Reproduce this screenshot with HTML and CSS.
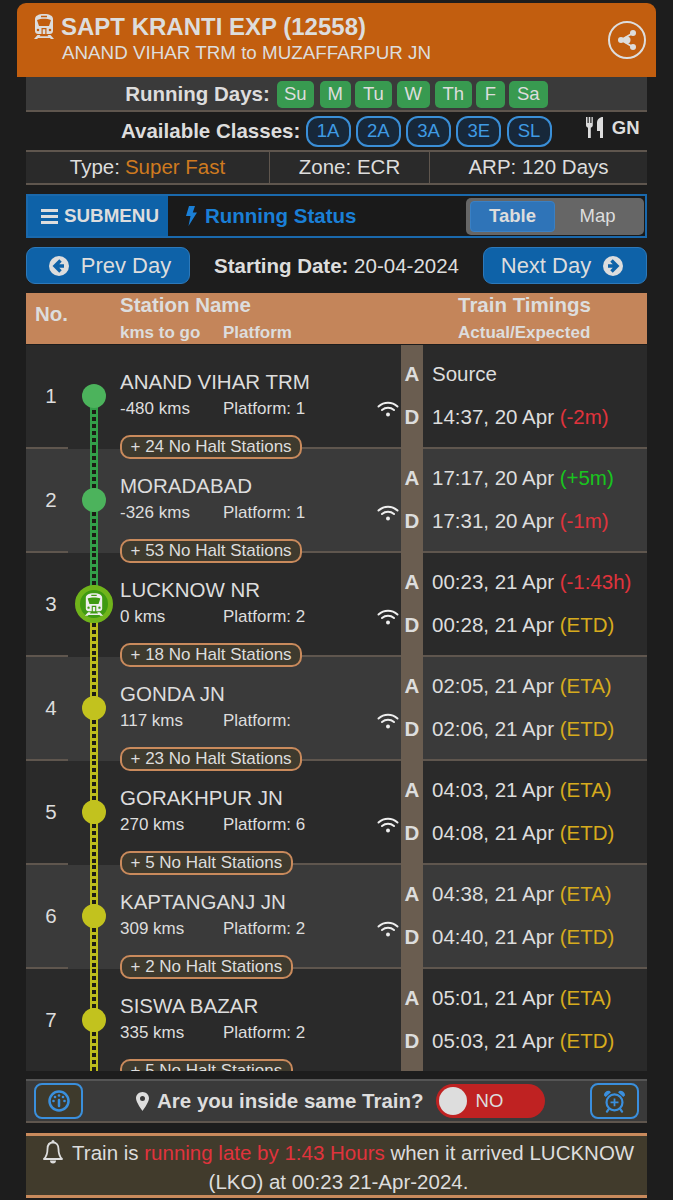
FILE: index.html
```html
<!DOCTYPE html>
<html lang="en">
<head>
<meta charset="utf-8">
<title>SAPT KRANTI EXP (12558)</title>
<link rel="stylesheet" href="styles.css">
</head>
<body>
<svg class="defs" width="0" height="0" aria-hidden="true">
  <symbol id="train" viewBox="0 0 22 25">
    <path fill="currentColor" fill-rule="evenodd" d="M11 0c6 0 9 2 9 5v12c0 2-1.500 3-3 3H5c-1.500 0-3-1-3-3V5c0-3 3-5 9-5zM8 1.800v1.400h6V1.800zM4 6l2 6h10l2-6c-4-1.600-10-1.600-14 0zM5 14.700a1.300 1.300 0 1 0 0 2.600 1.300 1.300 0 0 0 0-2.600zm12 0a1.300 1.300 0 1 0 0 2.600 1.300 1.300 0 0 0 0-2.600zM8.500 14v6h1.200v-4.800h2.600V20h1.200v-6z"/>
    <path fill="currentColor" d="M4.500 21h3l-1 1.300h9L14.500 21h3L21 25h-3.200l-.8-1H5l-.8 1H1z"/>
  </symbol>
  <symbol id="wifi" viewBox="0 0 22 16">
    <path fill="none" stroke="currentColor" stroke-width="2" stroke-linecap="round" d="M1.500 5.500c5.500-5 13.500-5 19 0M5 9c3.500-3 8.500-3 12 0"/>
    <circle cx="11" cy="13.500" r="2" fill="currentColor"/>
  </symbol>
</svg>

<header class="head">
  <svg class="head-train"><use href="#train"/></svg>
  <div class="head-text">
    <h1 class="head-title">SAPT KRANTI EXP (12558)</h1>
    <p class="head-sub">ANAND VIHAR TRM to MUZAFFARPUR JN</p>
  </div>
  <div class="share">
    <svg width="22" height="22" viewBox="0 0 22 22"><path fill="none" stroke="currentColor" stroke-width="2" d="M5 11l12-7M5 11l12 7"/><circle cx="5" cy="11" r="3" fill="currentColor"/><circle cx="17" cy="4" r="3" fill="currentColor"/><circle cx="17" cy="18" r="3" fill="currentColor"/><circle cx="11" cy="11" r="3.500" fill="currentColor"/></svg>
  </div>
</header>

<main class="wrap">
  <section class="days">
    <b class="lbl">Running Days:</b>
    <span class="day w-su">Su</span><span class="day w-m">M</span><span class="day w-tu">Tu</span><span class="day w-w">W</span><span class="day w-th">Th</span><span class="day w-f">F</span><span class="day w-sa">Sa</span>
  </section>

  <section class="classes">
    <b class="lbl">Available Classes:</b>
    <span class="cls">1A</span><span class="cls">2A</span><span class="cls">3A</span><span class="cls">3E</span><span class="cls">SL</span>
    <span class="food">
      <svg width="18" height="21" viewBox="0 0 18 21"><path fill="currentColor" d="M0 0h1.500v6h1.200V0h1.600v6h1.200V0H6.800v8c0 1.500-.8 2.300-2 2.700V21H2V10.700C.8 10.300 0 9.500 0 8zM17 0v21h-3v-7h-3V6c0-3.500 2.500-6 6-6z"/></svg>
      <b class="gn">GN</b>
    </span>
  </section>

  <section class="meta">
    <div class="meta-a">Type: <span class="orange">Super Fast</span></div>
    <div class="meta-b">Zone: ECR</div>
    <div class="meta-c">ARP: 120 Days</div>
  </section>

  <nav class="tabs">
    <div class="submenu">
      <svg width="17" height="15" viewBox="0 0 17 15"><path fill="currentColor" d="M0 0h17v3H0zM0 6h17v3H0zM0 12h17v3H0z"/></svg>
      <b>SUBMENU</b>
    </div>
    <div class="status">
      <svg width="11" height="20" viewBox="0 0 11 20"><path fill="currentColor" d="M3 0h6L6.800 6.500H11L2.500 20l2-10H0z"/></svg>
      <b>Running Status</b>
    </div>
    <div class="seg"><span class="seg-on">Table</span><span class="seg-off">Map</span></div>
  </nav>

  <section class="dates">
    <button class="btn btn-prev">
      <svg width="20" height="20" viewBox="0 0 20 20"><circle cx="10" cy="10" r="10" fill="currentColor"/><path fill="none" stroke="#0e62a8" stroke-width="3.500" d="M11.500 4.500L6 10l5.500 5.500M6.500 10H15"/></svg>
      <span>Prev Day</span>
    </button>
    <div class="start"><b>Starting Date:</b> 20-04-2024</div>
    <button class="btn btn-next">
      <span>Next Day</span>
      <svg width="20" height="20" viewBox="0 0 20 20"><circle cx="10" cy="10" r="10" fill="currentColor"/><path fill="none" stroke="#0e62a8" stroke-width="3.500" d="M8.500 4.500L14 10l-5.500 5.500M13.500 10H5"/></svg>
    </button>
  </section>

  <section class="thead">
    <b class="th-no">No.</b>
    <div class="th-st">
      <b class="th-big">Station Name</b>
      <div class="th-small"><b class="th-kms">kms to go</b><b>Platform</b></div>
    </div>
    <div class="th-tm">
      <b class="th-big">Train Timings</b>
      <div class="th-small"><b>Actual/Expected</b></div>
    </div>
  </section>

  <section class="list">
    <article class="row">
      <div class="no">1</div>
      <div class="tl tl-first"><i class="bar"></i><i class="dot"></i></div>
      <div class="st"><div class="st-main"><div class="name">ANAND VIHAR TRM</div><div class="sub"><span class="kms">-480 kms</span><span>Platform: 1</span></div><div class="pill">+ 24 No Halt Stations</div></div><svg class="wifi"><use href="#wifi"/></svg></div>
      <div class="ad"><b>A</b><b>D</b></div>
      <div class="tm"><div>Source</div><div>14:37, 20 Apr <span class="red">(-2m)</span></div></div>
    </article>
    <article class="row">
      <div class="no">2</div>
      <div class="tl"><i class="bar"></i><i class="dot"></i></div>
      <div class="st"><div class="st-main"><div class="name">MORADABAD</div><div class="sub"><span class="kms">-326 kms</span><span>Platform: 1</span></div><div class="pill">+ 53 No Halt Stations</div></div><svg class="wifi"><use href="#wifi"/></svg></div>
      <div class="ad"><b>A</b><b>D</b></div>
      <div class="tm"><div>17:17, 20 Apr <span class="green">(+5m)</span></div><div>17:31, 20 Apr <span class="red">(-1m)</span></div></div>
    </article>
    <article class="row">
      <div class="no">3</div>
      <div class="tl tl-now"><i class="bar"></i><i class="now"><svg width="22" height="25"><use href="#train"/></svg></i></div>
      <div class="st"><div class="st-main"><div class="name">LUCKNOW NR</div><div class="sub"><span class="kms">0 kms</span><span>Platform: 2</span></div><div class="pill">+ 18 No Halt Stations</div></div><svg class="wifi"><use href="#wifi"/></svg></div>
      <div class="ad"><b>A</b><b>D</b></div>
      <div class="tm"><div>00:23, 21 Apr <span class="red">(-1:43h)</span></div><div>00:28, 21 Apr <span class="gold">(ETD)</span></div></div>
    </article>
    <article class="row">
      <div class="no">4</div>
      <div class="tl tl-next"><i class="bar"></i><i class="dot"></i></div>
      <div class="st"><div class="st-main"><div class="name">GONDA JN</div><div class="sub"><span class="kms">117 kms</span><span>Platform:</span></div><div class="pill">+ 23 No Halt Stations</div></div><svg class="wifi"><use href="#wifi"/></svg></div>
      <div class="ad"><b>A</b><b>D</b></div>
      <div class="tm"><div>02:05, 21 Apr <span class="gold">(ETA)</span></div><div>02:06, 21 Apr <span class="gold">(ETD)</span></div></div>
    </article>
    <article class="row">
      <div class="no">5</div>
      <div class="tl tl-next"><i class="bar"></i><i class="dot"></i></div>
      <div class="st"><div class="st-main"><div class="name">GORAKHPUR JN</div><div class="sub"><span class="kms">270 kms</span><span>Platform: 6</span></div><div class="pill">+ 5 No Halt Stations</div></div><svg class="wifi"><use href="#wifi"/></svg></div>
      <div class="ad"><b>A</b><b>D</b></div>
      <div class="tm"><div>04:03, 21 Apr <span class="gold">(ETA)</span></div><div>04:08, 21 Apr <span class="gold">(ETD)</span></div></div>
    </article>
    <article class="row">
      <div class="no">6</div>
      <div class="tl tl-next"><i class="bar"></i><i class="dot"></i></div>
      <div class="st"><div class="st-main"><div class="name">KAPTANGANJ JN</div><div class="sub"><span class="kms">309 kms</span><span>Platform: 2</span></div><div class="pill">+ 2 No Halt Stations</div></div><svg class="wifi"><use href="#wifi"/></svg></div>
      <div class="ad"><b>A</b><b>D</b></div>
      <div class="tm"><div>04:38, 21 Apr <span class="gold">(ETA)</span></div><div>04:40, 21 Apr <span class="gold">(ETD)</span></div></div>
    </article>
    <article class="row">
      <div class="no">7</div>
      <div class="tl tl-next"><i class="bar"></i><i class="dot"></i></div>
      <div class="st"><div class="st-main"><div class="name">SISWA BAZAR</div><div class="sub"><span class="kms">335 kms</span><span>Platform: 2</span></div><div class="pill">+ 5 No Halt Stations</div></div></div>
      <div class="ad"><b>A</b><b>D</b></div>
      <div class="tm"><div>05:01, 21 Apr <span class="gold">(ETA)</span></div><div>05:03, 21 Apr <span class="gold">(ETD)</span></div></div>
    </article>
  </section>

  <section class="inside">
    <div class="sq">
      <svg width="22" height="22" viewBox="0 0 22 22"><circle cx="11" cy="11" r="9.500" fill="none" stroke="currentColor" stroke-width="2.500"/><path fill="none" stroke="currentColor" stroke-width="2.500" stroke-linecap="round" d="M11 10v6"/><circle cx="11" cy="5.500" r="1.300" fill="currentColor"/><circle cx="7" cy="7" r="1.300" fill="currentColor"/><circle cx="15" cy="7" r="1.300" fill="currentColor"/><circle cx="5.500" cy="11" r="1.300" fill="currentColor"/><circle cx="16.500" cy="11" r="1.300" fill="currentColor"/></svg>
    </div>
    <div class="q">
      <svg width="13" height="19" viewBox="0 0 13 19"><path fill="currentColor" fill-rule="evenodd" d="M6.500 0C10 0 13 2.800 13 6.300 13 10.500 6.500 19 6.500 19S0 10.500 0 6.300C0 2.800 3 0 6.500 0zm0 4a2.500 2.500 0 1 0 0 5 2.500 2.500 0 0 0 0-5z"/></svg>
      <b>Are you inside same Train?</b>
    </div>
    <div class="toggle"><i class="knob"></i><span>NO</span></div>
    <div class="sq">
      <svg width="23" height="23" viewBox="0 0 26 26"><circle cx="13" cy="14" r="9" fill="none" stroke="currentColor" stroke-width="2.500"/><path fill="none" stroke="currentColor" stroke-width="2" d="M13 9.500v9M8.500 14h9"/><path fill="currentColor" d="M1 6C1.500 2.500 4 .5 7.500 1L9 2.500 3 8zM25 6C24.500 2.500 22 .5 18.500 1L17 2.500 23 8z"/><path fill="none" stroke="currentColor" stroke-width="2.500" stroke-linecap="round" d="M6.500 21.500L4.500 24.500M19.500 21.500l2 3"/></svg>
    </div>
  </section>

  <section class="note">
    <svg class="bell" width="20" height="25" viewBox="0 0 20 25"><path fill="none" stroke="currentColor" stroke-width="1.800" stroke-linejoin="round" d="M10 2.500c-3.500 0-5.500 2.500-5.500 6.500 0 5-1.500 8-3.500 10h18c-2-2-3.500-5-3.500-10 0-4-2-6.500-5.500-6.500z"/><path fill="currentColor" d="M8.500 1.500a1.500 1.500 0 0 1 3 0V3h-3zM7 20.500h6a3 3 0 0 1-6 0z"/></svg>
    Train is <span class="late">running late by 1:43 Hours</span> when it arrived LUCKNOW (LKO) at 00:23 21-Apr-2024.
  </section>
</main>
</body>
</html>
```

FILE: styles.css
```css
* { box-sizing: border-box; }
html, body { margin: 0; padding: 0; }
body {
  height: 1200px;
  overflow: hidden;
  padding-top: 3px;
  background: #1d1d1d;
  color: #ddd;
  font-family: "Liberation Sans", Arial, sans-serif;
}
b { font-weight: 700; }
.defs { display: block; height: 0; }

.head {
  display: flex;
  align-items: flex-start;
  height: 74px;
  margin: 0 17px;
  padding: 10px 10px 0 16px;
  background: #c25e0f;
  border-radius: 9px 9px 0 0;
}
.head-train { width: 22px; height: 25px; margin-top: 1px; flex: none; color: #ddd; }
.head-text { flex: 1; margin-left: 6px; }
.head-title { margin: 0; font-size: 24px; line-height: 27px; font-weight: 700; }
.head-sub { margin: 2px 0 0 1px; font-size: 18.8px; line-height: 22px; }
.share {
  display: flex;
  align-items: center;
  justify-content: center;
  width: 38px;
  height: 38px;
  margin-top: 8px;
  border: 2px solid #ddd;
  border-radius: 50%;
}

.wrap { margin: 0 26px; }

.days {
  display: flex;
  align-items: center;
  justify-content: center;
  height: 35px;
  padding-top: 1px;
  gap: 4px;
  background: #3a3a3a;
  border-bottom: 2px solid #5f564e;
}
.lbl { font-size: 20.5px; }
.days .lbl { margin-right: 3px; }
.day {
  display: flex;
  align-items: center;
  justify-content: center;
  height: 27px;
  font-size: 18.5px;
  background: #389a50;
  border-radius: 5px;
}
.w-su, .w-tu, .w-th { width: 37px; }
.w-su { margin-right: 2px; }
.w-m { width: 31px; }
.w-w { width: 33px; margin: 0 1px; }
.w-f { width: 29px; }
.w-sa { width: 39px; }

.classes {
  display: flex;
  align-items: center;
  height: 38px;
  padding-left: 95px;
  gap: 5.25px;
}
.cls {
  display: flex;
  align-items: center;
  justify-content: center;
  width: 45px;
  height: 31px;
  font-size: 18.5px;
  color: #3f9be4;
  background: #17283a;
  border: 2px solid #3a8fd8;
  border-radius: 12px;
}
.food {
  display: flex;
  align-items: center;
  gap: 8px;
  margin-left: 29px;
  margin-top: -7px;
}
.gn { font-size: 18.5px; }

.meta {
  display: grid;
  grid-template-columns: 243px 160px 1fr;
  height: 35px;
  font-size: 20.5px;
  background: #2a2a2a;
  border-top: 2px solid #5f564e;
  border-bottom: 2px solid #5f564e;
}
.meta > div { display: flex; align-items: center; justify-content: center; gap: 5px; padding-bottom: 2px; }
.meta-b, .meta-c { border-left: 1px solid #5f564e; }
.orange { color: #cf7a1f; }

.tabs {
  display: flex;
  align-items: center;
  height: 44px;
  margin-top: 9px;
  background: #1a1a1a;
  border: 2px solid #1a69ad;
}
.submenu {
  display: flex;
  align-items: center;
  gap: 6px;
  width: 140px;
  height: 100%;
  padding-left: 13px;
  font-size: 18.8px;
  background: #0e62a8;
}
.status {
  display: flex;
  align-items: center;
  gap: 8px;
  flex: 1;
  padding-left: 18px;
  font-size: 20.5px;
  color: #1a7fd6;
}
.seg {
  display: flex;
  align-items: center;
  width: 178px;
  height: 37px;
  margin-right: 1px;
  padding: 3px 4px;
  font-size: 18.5px;
  background: #666;
  border-radius: 5px;
}
.seg-on {
  display: flex;
  align-items: center;
  justify-content: center;
  width: 85px;
  height: 31px;
  font-weight: 700;
  background: #2f74b8;
  border: 1px solid #3a80c4;
  border-radius: 4px;
}
.seg-off { flex: 1; text-align: center; }

.dates {
  display: flex;
  align-items: center;
  justify-content: space-between;
  margin-top: 9px;
  height: 37px;
}
.btn {
  display: flex;
  align-items: center;
  justify-content: center;
  gap: 12px;
  width: 164px;
  height: 37px;
  padding: 0;
  font: 22px "Liberation Sans", Arial, sans-serif;
  color: #ddd;
  background: #0e62a8;
  border: 1px solid #2d79ba;
  border-radius: 9px;
}
.btn-prev { padding-left: 4px; }
.btn-next { padding-right: 6px; }
.start { font-size: 20.5px; }

.thead {
  display: grid;
  grid-template-columns: 94px 338px 1fr;
  height: 51px;
  margin-top: 9px;
  color: #ddd;
  background: #c4855a;
}
.th-no { align-self: center; padding: 0 0 9px 9px; font-size: 20.5px; }
.th-big { display: block; font-size: 20.5px; line-height: 24px; }
.th-small { display: flex; margin-top: 4px; font-size: 17px; line-height: 23px; }
.th-kms { width: 103px; }

.list {
  height: 726px;
  margin-top: 1px;
  overflow: hidden;
}
.row {
  display: grid;
  grid-template-columns: 42px 52px 281px 22px 1fr;
  grid-template-rows: 104px;
  height: 104px;
  background: #2a2a2a;
}
.row:nth-child(even) { background: #3a3a3a; }
.no {
  display: flex;
  align-items: center;
  justify-content: center;
  padding-left: 8px;
  font-size: 20.5px;
  border-bottom: 2px solid #5f564e;
}
.tl {
  --line: #339f49;
  position: relative;
  display: flex;
  justify-content: center;
  align-items: flex-start;
  padding-top: 39px;
}
.tl-next { --line: #bcbc1c; }
.bar {
  position: absolute;
  top: 0;
  bottom: 0;
  left: 22px;
  width: 8px;
  background: repeating-linear-gradient(to bottom, #1c1c14 0 4px, transparent 4px 7px) center / 4px 100% no-repeat, var(--line);
}
.tl-first .bar { top: 51px; }
.tl-now .bar {
  background: repeating-linear-gradient(to bottom, #1c1c14 0 4px, transparent 4px 7px) center / 4px 100% no-repeat, linear-gradient(to bottom, #339f49 51px, #bcbc1c 51px);
}
.dot {
  position: relative;
  width: 24px;
  height: 24px;
  background: #4cb35c;
  border-radius: 50%;
}
.tl-next .dot { background: #c2c21e; }
.tl-now { padding-top: 32px; }
.now {
  position: relative;
  z-index: 2;
  display: flex;
  align-items: center;
  justify-content: center;
  width: 38px;
  height: 38px;
  color: #eee;
  background: #3f9a12;
  border: 5px solid #70b41b;
  border-radius: 50%;
}
.now svg { width: 20px; height: 23px; }
.st {
  display: flex;
  align-items: flex-start;
  padding-top: 24px;
  border-bottom: 2px solid #5f564e;
}
.st-main { flex: 1; }
.name { font-size: 20.5px; line-height: 26px; }
.sub { display: flex; margin-top: 1px; font-size: 17px; line-height: 26px; }
.kms { width: 103px; }
.pill {
  position: relative;
  z-index: 1;
  display: inline-block;
  height: 24px;
  margin-top: 13px;
  padding: 0 8.500px;
  font-size: 17px;
  line-height: 20px;
  background: #3e3a2e;
  border: 2px solid #c98a5c;
  border-radius: 10px;
}
.wifi {
  flex: none;
  width: 22px;
  height: 16px;
  margin: 32px 2px 0 0;
  color: #eee;
}
.ad {
  display: flex;
  flex-direction: column;
  align-items: center;
  gap: 17px;
  padding-top: 16px;
  font-size: 20.5px;
  line-height: 26px;
  background: #6a5d50;
}
.tm {
  display: flex;
  flex-direction: column;
  gap: 17px;
  padding: 16px 0 0 9px;
  font-size: 20.5px;
  line-height: 26px;
  border-bottom: 2px solid #5f564e;
}
.red { color: #e0333c; }
.green { color: #19c41e; }
.gold { color: #d6ab1d; }

.inside {
  display: flex;
  align-items: center;
  height: 44px;
  margin-top: 8px;
  padding: 0 8px;
  background: #3a3a3a;
  border-top: 2px solid #555;
  border-bottom: 2px solid #5f564e;
}
.sq {
  display: flex;
  align-items: center;
  justify-content: center;
  flex: none;
  width: 49px;
  height: 36px;
  color: #3a8fdc;
  background: #3e3a2c;
  border: 2px solid #3a8fdc;
  border-radius: 8px;
}
.q {
  display: flex;
  flex: none;
  align-items: center;
  gap: 8px;
  margin-left: 53px;
  font-size: 20.5px;
  white-space: nowrap;
}
.toggle {
  display: flex;
  flex: none;
  align-items: center;
  gap: 9px;
  width: 109px;
  height: 34px;
  margin: 0 45px 0 12px;
  padding-left: 3px;
  font-size: 18.5px;
  background: #bf2222;
  border-radius: 17px;
}
.knob {
  width: 28px;
  height: 28px;
  background: #ddd;
  border-radius: 50%;
}

.note {
  height: 65px;
  margin-top: 10px;
  padding: 2px 8px 0 12px;
  font-size: 20.5px;
  line-height: 29px;
  text-align: center;
  background: #413b2c;
  border-top: 3px solid #c98a5c;
  border-bottom: 3px solid #c98a5c;
}
.bell { margin: 0 4px -5px 0; }
.late { color: #e0333c; }
```
